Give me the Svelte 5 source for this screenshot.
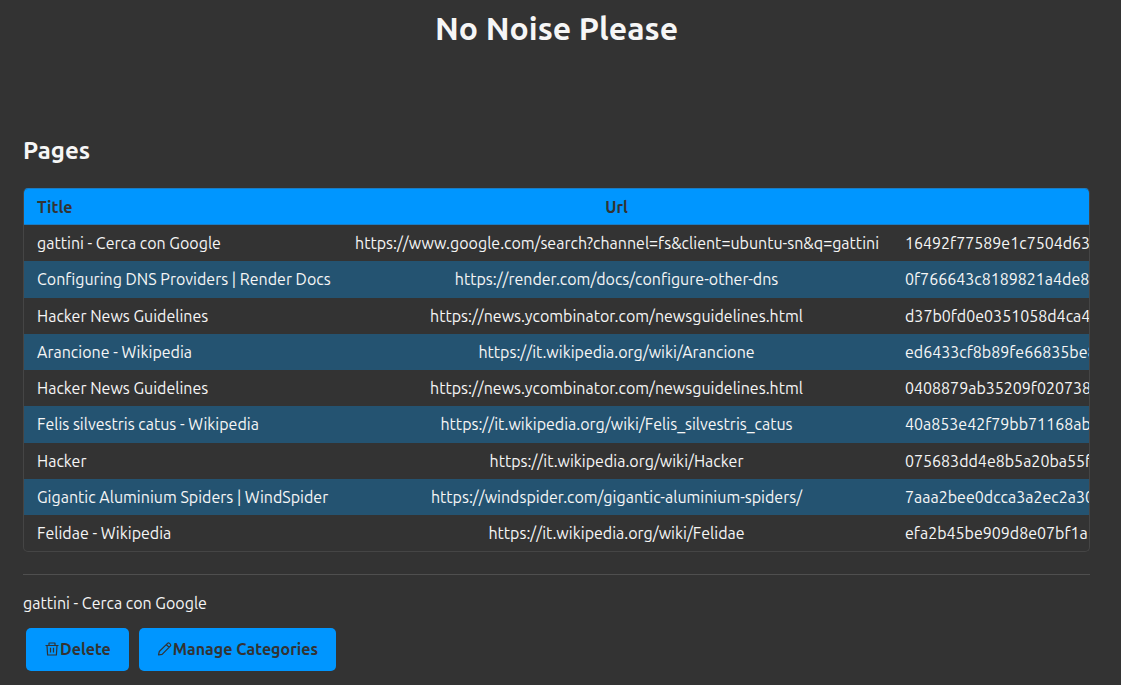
<script>
  const pages = [
    { title: 'gattini - Cerca con Google', url: 'https://www.google.com/search?channel=fs&client=ubuntu-sn&q=gattini', hash: '16492f77589e1c7504d632' },
    { title: 'Configuring DNS Providers | Render Docs', url: 'https://render.com/docs/configure-other-dns', hash: '0f766643c8189821a4de8' },
    { title: 'Hacker News Guidelines', url: 'https://news.ycombinator.com/newsguidelines.html', hash: 'd37b0fd0e0351058d4ca4' },
    { title: 'Arancione - Wikipedia', url: 'https://it.wikipedia.org/wiki/Arancione', hash: 'ed6433cf8b89fe66835be8' },
    { title: 'Hacker News Guidelines', url: 'https://news.ycombinator.com/newsguidelines.html', hash: '0408879ab35209f020738' },
    { title: 'Felis silvestris catus - Wikipedia', url: 'https://it.wikipedia.org/wiki/Felis_silvestris_catus', hash: '40a853e42f79bb71168ab' },
    { title: 'Hacker', url: 'https://it.wikipedia.org/wiki/Hacker', hash: '075683dd4e8b5a20ba55f' },
    { title: 'Gigantic Aluminium Spiders | WindSpider', url: 'https://windspider.com/gigantic-aluminium-spiders/', hash: '7aaa2bee0dcca3a2ec2a30' },
    { title: 'Felidae - Wikipedia', url: 'https://it.wikipedia.org/wiki/Felidae', hash: 'efa2b45be909d8e07bf1a' }
  ];
  let selected = $state(pages[0]);
</script>

<main>
  <h1>No Noise Please</h1>
  <h2>Pages</h2>

  <div class="frame">
    <table>
      <colgroup>
        <col class="c-title" />
        <col class="c-url" />
        <col />
      </colgroup>
      <thead>
        <tr><th>Title</th><th>Url</th><th></th></tr>
      </thead>
      <tbody>
        {#each pages as page}
          <tr onclick={() => (selected = page)}>
            <td>{page.title}</td>
            <td>{page.url}</td>
            <td>{page.hash}</td>
          </tr>
        {/each}
      </tbody>
    </table>
  </div>

  <hr />
  <p>{selected.title}</p>

  <div class="actions">
    <button type="button">
      <svg viewBox="0 0 16 16" aria-hidden="true"><path class="line" d="M1.500 4.500H14.500M5 4.500V2H11V4.500M3 4.500 3.600 14H12.400L13 4.500M6.500 6.800V11.500M9.500 6.800V11.500" /></svg>Delete
    </button>
    <button type="button">
      <svg viewBox="0 0 16 16" aria-hidden="true"><path class="line" d="M1.500 14 2.300 10.500 10.500 2.300Q11.500 1.300 12.500 2.300L13.300 3.100Q14.300 4.100 13.300 5.100L5.100 13.300ZM9.300 3.500 12.100 6.300" /></svg>Manage Categories
    </button>
  </div>
</main>

<style>
  :global(body) {
    margin: 0;
    background: #333;
  }
  main {
    padding: 8px 31px 14px 23px;
    color: #f6f6f6;
    font: 16px/20px Ubuntu, "Noto Sans", sans-serif;
  }
  h1 {
    margin: 0;
    font-size: 32px;
    line-height: 40px;
    text-align: center;
  }
  h2 {
    margin: 88px 0 22px;
    font-size: 24px;
    line-height: 30px;
  }
  .frame {
    border: 1px solid #454545;
    border-top-color: #1a7cc4;
    border-radius: 5px;
    overflow: hidden;
  }
  table {
    width: 100%;
    table-layout: fixed;
    border-collapse: collapse;
  }
  .c-title { width: 318px; }
  .c-url { width: 549px; }
  th, td {
    padding: 8px 13px;
    text-align: center;
    white-space: nowrap;
  }
  th {
    background: #0096ff;
    box-shadow: inset 0 -1px #1a7cc4;
    color: #333;
  }
  th:first-child, td:first-child, td:last-child { text-align: left; }
  td:last-child { padding: 8px 0 8px 14px; }
  tbody tr { cursor: pointer; }
  tbody tr:nth-child(even) { background: #245371; }
  tbody tr:nth-child(4n + 2) td { padding-bottom: 9px; }
  hr {
    height: 1px;
    margin: 22px 0 18px;
    border: 0;
    background: #4f4f4f;
  }
  p { margin: 0; }
  .actions {
    display: flex;
    gap: 10px;
    padding: 15px 3px 0;
  }
  button {
    display: flex;
    align-items: center;
    height: 43px;
    padding: 0 18px 1px;
    border: 0;
    border-radius: 5px;
    background: #0096ff;
    color: #333;
    font: bold 16px/20px Ubuntu, "Noto Sans", sans-serif;
    cursor: pointer;
  }
  svg {
    width: 16px;
    height: 16px;
  }
  .line {
    fill: none;
    stroke: currentColor;
    stroke-width: 1.2;
    stroke-linejoin: round;
  }
</style>
